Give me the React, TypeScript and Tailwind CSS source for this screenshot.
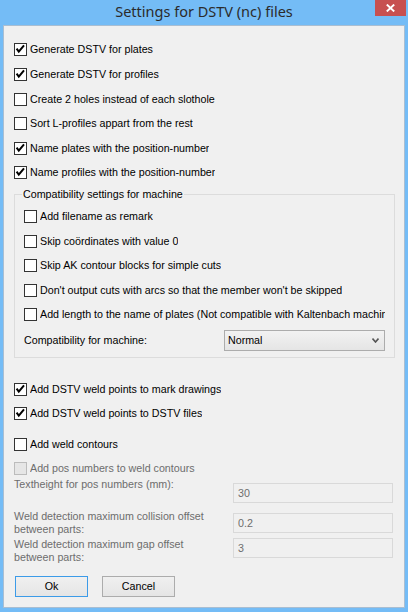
import clsx from 'clsx';

function Box({ checked, disabled }: { checked?: boolean; disabled?: boolean }) {
  return (
    <span
      className={clsx(
        'w-[13px] h-[13px] border shrink-0 flex',
        disabled ? 'border-[#bcbcbc] bg-[#e6e6e6]' : 'border-[#333333] bg-white'
      )}
    >
      {checked && (
        <svg width="11" height="11" viewBox="0 0 11 11">
          <path d="M1.6 4.6 L3.8 7.6 L9 1.4" stroke="#000" strokeWidth="2" fill="none" />
        </svg>
      )}
    </span>
  );
}

function Check({
  label,
  checked,
  disabled,
  className,
}: {
  label: string;
  checked?: boolean;
  disabled?: boolean;
  className?: string;
}) {
  return (
    <div className={clsx('pt-[6px]', className)}>
      <label className="flex items-center gap-[3px] h-[13px]">
        <Box checked={checked} disabled={disabled} />
        <span
          className={clsx(
            'leading-[13px] whitespace-nowrap overflow-hidden',
            disabled ? 'text-[#6d6d6d]' : 'text-black'
          )}
        >
          {label}
        </span>
      </label>
    </div>
  );
}

function Field({ value, className }: { value: string; className?: string }) {
  return (
    <div
      className={clsx(
        'w-[160px] h-[20px] border border-[#d9d9d9] bg-[#f0f0f0] pl-[4px] flex items-center text-[#6d6d6d] shrink-0',
        className
      )}
    >
      {value}
    </div>
  );
}

function Button({ label, primary }: { label: string; primary?: boolean }) {
  return (
    <button
      className={clsx(
        'w-[73px] h-[21px] border bg-gradient-to-b from-[#f0f0f0] to-[#e5e5e5] text-black leading-[13px]',
        primary ? 'border-[#3c9be8]' : 'border-[#acacac]'
      )}
    >
      {label}
    </button>
  );
}

export default function App() {
  return (
    <div className="w-[408px] h-[612px] bg-[#74bcf6] flex flex-col font-['Liberation_Sans',Arial,sans-serif] text-[10.7px]">
      <div className="relative h-[25px] flex items-center justify-center pb-[1px]">
        <span className="font-['Noto_Sans',sans-serif] text-[14.5px] text-[#2b2b2b]">
          Settings for DSTV (nc) files
        </span>
        <div className="absolute top-0 right-[2px] w-[31px] h-[16px] bg-[#c75050] flex items-center justify-center">
          <svg width="9" height="8" viewBox="0 0 9 8">
            <path d="M0.8 0.6 L8.2 7.4 M8.2 0.6 L0.8 7.4" stroke="#fff" strokeWidth="2" />
          </svg>
        </div>
      </div>

      <div className="ml-[3px] w-[402px] h-[583px] bg-[#f0f0f0] border border-[#a9bed2] pl-[10px] pt-[11px]">
        <Check className="h-[25px]" checked label="Generate DSTV for plates" />
        <Check className="h-[25px]" checked label="Generate DSTV for profiles" />
        <Check className="h-[24px]" label="Create 2 holes instead of each slothole" />
        <Check className="h-[25px]" label="Sort L-profiles appart from the rest" />
        <Check className="h-[24px]" checked label="Name plates with the position-number" />
        <Check className="h-[24px]" checked label="Name profiles with the position-number" />

        <fieldset className="mt-[3px] w-[381px] border border-[#dcdcdc]">
          <legend className="ml-[7px] px-[1px] leading-[14px]">Compatibility settings for machine</legend>
          <div className="pl-[9px] pt-[3px] pb-[6px]">
            <Check className="h-[25px]" label="Add filename as remark" />
            <Check className="h-[24px]" label="Skip coördinates with value 0" />
            <Check className="h-[25px]" label="Skip AK contour blocks for simple cuts" />
            <Check className="h-[24px]" label="Don't output cuts with arcs so that the member won't be skipped" />
            <Check
              className="h-[24px] w-[361px]"
              label="Add length to the name of plates (Not compatible with Kaltenbach machines)"
            />
            <div className="mt-[4px] flex items-center h-[21px]">
              <span className="w-[200px] leading-[13px]">Compatibility for machine:</span>
              <div className="w-[161px] h-[21px] border border-[#acacac] bg-gradient-to-b from-[#f2f2f2] to-[#e5e5e5] flex items-center justify-between pl-[3px] pr-[5px]">
                <span>Normal</span>
                <svg width="7" height="5" viewBox="0 0 7 5">
                  <path d="M0.5 0.5 L3.5 4 L6.5 0.5" stroke="#555" strokeWidth="1.6" fill="none" />
                </svg>
              </div>
            </div>
          </div>
        </fieldset>

        <Check className="mt-[19px] h-[24px]" checked label="Add DSTV weld points to mark drawings" />
        <Check className="h-[24px]" checked label="Add DSTV weld points to DSTV files" />
        <Check className="mt-[7px] h-[24px]" label="Add weld contours" />
        <Check className="h-[22px]" disabled label="Add pos numbers to weld contours" />

        <div className="flex items-start h-[25px] text-[#6d6d6d] leading-[13px]">
          <span className="w-[219px]">Textheight for pos numbers (mm):</span>
          <Field className="mt-[5px]" value="30" />
        </div>
        <div className="mt-[7px] flex items-start h-[26px] text-[#6d6d6d] leading-[13px]">
          <span className="w-[219px]">
            Weld detection maximum collision offset
            <br />
            between parts:
          </span>
          <Field className="mt-[3px]" value="0.2" />
        </div>
        <div className="mt-[2px] flex items-start h-[26px] text-[#6d6d6d] leading-[13px]">
          <span className="w-[219px]">
            Weld detection maximum gap offset
            <br />
            between parts:
          </span>
          <Field value="3" />
        </div>

        <div className="mt-[12px] ml-[1px] flex gap-[14px]">
          <Button primary label="Ok" />
          <Button label="Cancel" />
        </div>
      </div>
    </div>
  );
}
